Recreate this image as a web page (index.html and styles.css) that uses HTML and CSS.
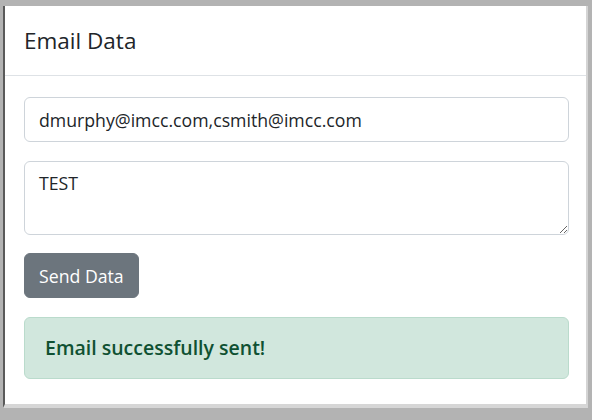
FILE: index.html
```html
<!DOCTYPE html>
<html>
<head>
<meta charset="utf-8">
<link rel="stylesheet" href="styles.css">
</head>
<body>
<div class="modal">
  <div class="modal-header">
    <h5 class="modal-title">Email Data</h5>
  </div>
  <div class="modal-body">
    <input class="form-control" type="text" value="dmurphy@imcc.com,csmith@imcc.com">
    <textarea class="form-control textarea">TEST</textarea>
    <button class="btn">Send Data</button>
    <div class="alert">Email successfully sent!</div>
  </div>
</div>
</body>
</html>
```
FILE: styles.css
```css
html, body {
  margin: 0;
  padding: 0;
  height: 100%;
}
body {
  background: #b3b3b3;
  font-family: "Open Sans", "Noto Sans", sans-serif;
  color: #212529;
  padding: 6px 4px 0 3px;
  box-sizing: border-box;
}
.modal {
  background: #fff;
  border-left: 2px solid #5a5a5a;
  border-right: 2px solid #d4d4d4;
  border-bottom: 4px solid #d6d6d6;
  height: 402px;
  box-sizing: border-box;
  display: flex;
  flex-direction: column;
}
.modal-header {
  height: 70px;
  box-sizing: border-box;
  border-bottom: 1px solid #dee2e6;
  display: flex;
  align-items: center;
  padding: 0 19px;
}
.modal-title {
  margin: 0;
  font-size: 22.5px;
  font-weight: 400;
  color: #212529;
}
.modal-body {
  padding: 21px 17px 0 19px;
  display: flex;
  flex-direction: column;
  align-items: flex-start;
}
.form-control {
  width: 100%;
  box-sizing: border-box;
  border: 1px solid #ced4da;
  border-radius: 6px;
  font-family: inherit;
  font-size: 17.7px;
  color: #212529;
  padding: 0 14px;
  height: 45px;
  margin: 0;
  outline: none;
  background: #fff;
}
.textarea {
  margin-top: 19px;
  height: 74px;
  padding: 9px 14px;
  resize: vertical;
}
.btn {
  margin-top: 18px;
  background: #6c757d;
  border: 1px solid #6c757d;
  color: #fff;
  font-family: inherit;
  font-size: 17.7px;
  height: 45px;
  padding: 0 14px;
  border-radius: 6px;
}
.alert {
  margin-top: 19px;
  width: 100%;
  box-sizing: border-box;
  height: 62px;
  background: #d1e7dd;
  border: 1px solid #badbcc;
  color: #0f5132;
  border-radius: 6px;
  padding: 0 0 2px 20px;
  display: flex;
  align-items: center;
  font-size: 19.5px;
  font-weight: 600;
}
```
